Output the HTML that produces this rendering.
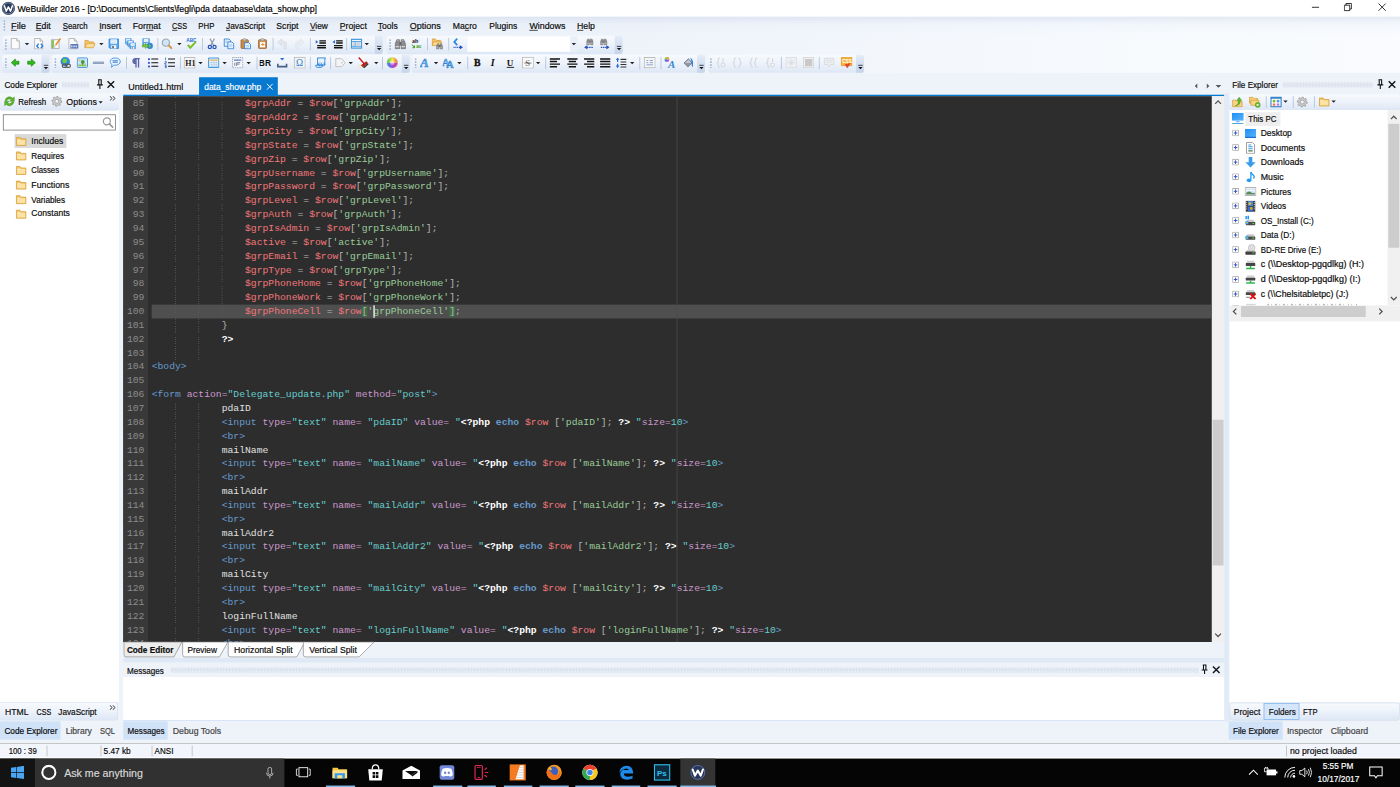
<!DOCTYPE html>
<html>
<head>
<meta charset="utf-8">
<title>WeBuilder 2016</title>
<style>
html,body{margin:0;padding:0;width:1400px;height:787px;overflow:hidden;background:#eef3fa;}
#root{position:absolute;left:0;top:0;width:1920px;height:1080px;transform-origin:0 0;transform:scale(0.729167,0.7287);font-family:"Liberation Sans",sans-serif;font-size:12px;color:#0c0c0c;background:#eef3fa;overflow:hidden;}
#root *{box-sizing:border-box;}
.a{position:absolute;}
.s{position:absolute;display:inline-block;white-space:pre;-webkit-text-stroke:.25px;transform-origin:0 0;transform:scaleX(1);line-height:16px;height:16px;}
.u{text-decoration:underline;}
/* title bar */
#title{left:0;top:0;width:1920px;height:23px;background:#fff;}
/* menubar */
#menu{left:0;top:23px;width:1920px;height:25px;background:linear-gradient(rgba(200,212,232,.45),rgba(220,230,245,.2) 40%,rgba(238,243,250,0));}
/* toolbars */
.tb{border-radius:4px;background:linear-gradient(#f7fafd,#eef3fb 45%,#dde7f5);}
.ovf{position:absolute;right:0;top:0;width:11px;height:25px;border-radius:0 4px 4px 0;background:linear-gradient(#e4ecf7,#c6d4e9);}
.ovf:before{content:"";position:absolute;left:3px;top:14px;width:6px;height:1.500px;background:#111;}
.ovf:after{content:"";position:absolute;left:3px;top:17px;border:3px solid transparent;border-top:3.500px solid #111;border-bottom:none;}
.grip{position:absolute;width:2px;background:repeating-linear-gradient(#a4b7d3 0 2px,transparent 2px 4px);}
.sep{position:absolute;width:1px;height:17px;background:#a9bbd6;}
.dd{position:absolute;border:3.500px solid transparent;border-top:3.500px solid #222;border-bottom:none;width:0;height:0;}
.dots{background-image:radial-gradient(circle at 1px 1px,#ccd5e2 0.9px,transparent 1.2px),radial-gradient(circle at 1px 1px,#ccd5e2 0.9px,transparent 1.2px);background-size:4px 4px;background-position:0 0,2px 2px;}
.vs{top:1023px;width:1px;height:15px;background:#b5b5b5}
/* editor */
#ed{left:169px;top:132px;width:1493px;height:749px;background:#2d2d2d;overflow:hidden;font-family:"Liberation Mono",monospace;font-size:13.333px;color:#cccccc;}
#gut{left:0;top:0;width:34px;height:750px;background:#393939;}
.ln{position:absolute;left:0;width:100%;height:19px;line-height:19px;white-space:pre;}
.ln i{font-style:normal;position:absolute;left:0;width:29px;text-align:right;color:#8c8c8c;}
.ln b.c{font-weight:normal;position:absolute;left:39px;}
.ig{width:1px;background:repeating-linear-gradient(#5c5c5c 0 1px,transparent 1px 2.500px)}
.bm{background:#3f6b45;}
.v{color:#f2777a}.g{color:#99cc99}.t{color:#6699cc}.at{color:#cc99cc}.q{color:#66cccc}.p{color:#b4b7b4}.k{color:#6699cc;font-weight:bold}.w{color:#ffffff;font-weight:bold}.x{color:#e0e0e0}
</style>
</head>
<body>
<div id="root">

<!-- TITLE BAR -->
<div id="title" class="a">
  <svg class="a" style="left:2px;top:2px" width="19" height="19" viewBox="0 0 19 19"><circle cx="9.5" cy="9.5" r="9" fill="#2a3a5c"/><circle cx="9.5" cy="9.5" r="7.6" fill="none" stroke="#9aa7c0" stroke-width="1"/><path d="M4 6 L6.6 13.5 L9.5 7.5 L12.4 13.5 L15 6" fill="none" stroke="#fff" stroke-width="2" stroke-linejoin="round" stroke-linecap="round"/></svg>
  <span class="s" style="left:24px;top:4px;color:#000">WeBuilder 2016 - [D:\Documents\Clients\fegli\pda dataabase\data_show.php]</span>
  <svg class="a" style="left:1799px;top:4px" width="10" height="12" viewBox="0 0 10 12"><path d="M0 6H10" stroke="#000" stroke-width="1.100"/></svg>
  <svg class="a" style="left:1843px;top:4px" width="11" height="12" viewBox="0 0 11 12"><path d="M.6 3.100H8.100V10.600H.6Z M2.900 3.100V.8H10.400V8.300H8.100" fill="none" stroke="#000" stroke-width="1.100"/></svg>
  <svg class="a" style="left:1890px;top:4px" width="11" height="12" viewBox="0 0 11 12"><path d="M.5 .8L10.500 10.800M10.500 .8L.5 10.800" stroke="#000" stroke-width="1.100"/></svg>
</div>

<div class="a" style="left:0;top:23px;width:1920px;height:77px;background:linear-gradient(90deg,#e9eff8,#eef3fa 45%,#f7fafd 80%,#f9fbfe)"></div>
<!-- MENU BAR -->
<div id="menu" class="a">
  <div class="grip" style="left:5px;top:5px;height:14px"></div>
</div>
<span class="s" style="left:15.1px;top:28.0px;transform:scaleX(1.063)"><span class="u">F</span>ile</span>
<span class="s" style="left:49.4px;top:28.0px;transform:scaleX(0.994)"><span class="u">E</span>dit</span>
<span class="s" style="left:86.4px;top:28.0px;transform:scaleX(0.901)"><span class="u">S</span>earch</span>
<span class="s" style="left:135.8px;top:28.0px;transform:scaleX(1.005)"><span class="u">I</span>nsert</span>
<span class="s" style="left:182.4px;top:28.0px;transform:scaleX(1.010)">For<span class="u">m</span>at</span>
<span class="s" style="left:235.9px;top:28.0px;transform:scaleX(0.833)"><span class="u">C</span>SS</span>
<span class="s" style="left:271.5px;top:28.0px;transform:scaleX(0.889)">PHP</span>
<span class="s" style="left:309.9px;top:28.0px;transform:scaleX(0.955)"><span class="u">J</span>avaScript</span>
<span class="s" style="left:378.5px;top:28.0px;transform:scaleX(0.983)">Scr<span class="u">i</span>pt</span>
<span class="s" style="left:425.1px;top:28.0px;transform:scaleX(0.956)"><span class="u">V</span>iew</span>
<span class="s" style="left:466.3px;top:28.0px;transform:scaleX(0.991)"><span class="u">P</span>roject</span>
<span class="s" style="left:518.4px;top:28.0px;transform:scaleX(0.979)"><span class="u">T</span>ools</span>
<span class="s" style="left:562.3px;top:28.0px;transform:scaleX(1.028)"><span class="u">O</span>ptions</span>
<span class="s" style="left:621.3px;top:28.0px;transform:scaleX(0.987)">Ma<span class="u">c</span>ro</span>
<span class="s" style="left:670.6px;top:28.0px;transform:scaleX(0.976)">Plugins</span>
<span class="s" style="left:725.5px;top:28.0px;transform:scaleX(1.014)"><span class="u">W</span>indows</span>
<span class="s" style="left:791.3px;top:28.0px;transform:scaleX(1.000)"><span class="u">H</span>elp</span>


<!-- TOOLBARS -->
<div class="a tb" style="left:3.2px;top:48.5px;width:521.8px;height:25px"><div class="ovf"></div></div>
<div class="grip" style="left:6.7px;top:53.5px;height:15px"></div>
<div class="a tb" style="left:530.2px;top:48.5px;width:323.7px;height:25px"><div class="ovf"></div></div>
<div class="grip" style="left:533.7px;top:53.5px;height:15px"></div>
<div class="a tb" style="left:3.2px;top:74.5px;width:64.9px;height:25px"><div class="ovf"></div></div>
<div class="grip" style="left:6.7px;top:79.5px;height:15px"></div>
<div class="a tb" style="left:71.3px;top:74.5px;width:491.0px;height:25px"><div class="ovf"></div></div>
<div class="grip" style="left:74.8px;top:79.5px;height:15px"></div>
<div class="a tb" style="left:565.4px;top:74.5px;width:401.8px;height:25px"><div class="ovf"></div></div>
<div class="grip" style="left:568.9px;top:79.5px;height:15px"></div>
<div class="a tb" style="left:970.7px;top:74.5px;width:214.5px;height:25px"><div class="ovf"></div></div>
<div class="grip" style="left:974.2px;top:79.5px;height:15px"></div>
<div class="a" style="left:641px;top:50px;width:151px;height:21px;background:#e9eff9"></div><div class="a" style="left:641px;top:50px;width:141px;height:21px;background:#fff"></div>
<svg class="a" style="left:12.6px;top:52px" width="16" height="16" viewBox="0 0 16 16"><path d="M2.500 .8H10L13.500 4.300V15.200H2.500Z" fill="#fbfbfb" stroke="#a3a3a3"/><path d="M10 .8V4.300H13.500" fill="#e8e8e8" stroke="#a3a3a3"/></svg>
<svg class="a" style="left:45.1px;top:52px" width="16" height="16" viewBox="0 0 16 16"><path d="M2.500 .8H10L13.500 4.300V15.200H2.500Z" fill="#fbfbfb" stroke="#a3a3a3"/><path d="M10 .8V4.300H13.500" fill="#e8e8e8" stroke="#a3a3a3"/><path d="M8 8L5.500 11L8 14M11 8L13.500 11L11 14" fill="none" stroke="#2a7fd4" stroke-width="2"/></svg>
<svg class="a" style="left:68.1px;top:52px" width="16" height="16" viewBox="0 0 16 16"><path d="M2.500 2.500H13V14.500H2.500Z" fill="#fbfbfb" stroke="#9a9a9a"/><rect x="3" y="3" width="3" height="11" fill="#8cc152"/><path d="M14.500 1.500L8 10" stroke="#e8902a" stroke-width="2.200" stroke-linecap="round"/><path d="M8 10L6.500 13" stroke="#d9d9d9" stroke-width="2.200" stroke-linecap="round"/></svg>
<svg class="a" style="left:92.1px;top:52px" width="16" height="16" viewBox="0 0 16 16"><path d="M2.500 .8H10L13.500 4.300V15.200H2.500Z" fill="#fbfbfb" stroke="#a3a3a3"/><path d="M10 .8V4.300H13.500" fill="#e8e8e8" stroke="#a3a3a3"/><rect x="4.500" y="8.500" width="11" height="6" rx="1" fill="#5b78b8"/><path d="M6.500 10.500V13M9.500 10.500V13M12.500 10.500V13" stroke="#fff" stroke-width="1.500"/></svg>
<svg class="a" style="left:115.4px;top:52px" width="16" height="16" viewBox="0 0 16 16"><path d="M1.500 13.500V3.500H6L7.500 5.500H13V7" fill="#f5c770" stroke="#d9962f"/><path d="M1.500 13.500L4 7.500H15.500L13 13.500Z" fill="#fbdc9a" stroke="#d9962f"/></svg>
<svg class="a" style="left:148.0px;top:52px" width="16" height="16" viewBox="0 0 16 16"><path d="M1.500 1.500H14.500V14.500H3L1.500 13Z" fill="#56a6ee" stroke="#2b7fd6"/><rect x="3.500" y="2" width="9" height="6" fill="#f6faff"/><path d="M4.500 4H11.500M4.500 6H11.500" stroke="#b9cfe8" stroke-width=".8"/><rect x="4.500" y="10" width="7" height="4.500" fill="#f1f5fa"/><rect x="6" y="11" width="2" height="3" fill="#4a4a4a"/></svg>
<svg class="a" style="left:170.7px;top:52px" width="16" height="16" viewBox="0 0 16 16"><g transform="scale(.62) translate(0,0)"><path d="M1.500 1.500H14.500V14.500H3L1.500 13Z" fill="#56a6ee" stroke="#2b7fd6"/><rect x="3.500" y="2" width="9" height="6" fill="#f6faff"/><path d="M4.500 4H11.500M4.500 6H11.500" stroke="#b9cfe8" stroke-width=".8"/><rect x="4.500" y="10" width="7" height="4.500" fill="#f1f5fa"/><rect x="6" y="11" width="2" height="3" fill="#4a4a4a"/></g><g transform="translate(3,3) scale(.62)"><path d="M1.500 1.500H14.500V14.500H3L1.500 13Z" fill="#56a6ee" stroke="#2b7fd6"/><rect x="3.500" y="2" width="9" height="6" fill="#f6faff"/><path d="M4.500 4H11.500M4.500 6H11.500" stroke="#b9cfe8" stroke-width=".8"/><rect x="4.500" y="10" width="7" height="4.500" fill="#f1f5fa"/><rect x="6" y="11" width="2" height="3" fill="#4a4a4a"/></g><g transform="translate(6,6) scale(.62)"><path d="M1.500 1.500H14.500V14.500H3L1.500 13Z" fill="#56a6ee" stroke="#2b7fd6"/><rect x="3.500" y="2" width="9" height="6" fill="#f6faff"/><path d="M4.500 4H11.500M4.500 6H11.500" stroke="#b9cfe8" stroke-width=".8"/><rect x="4.500" y="10" width="7" height="4.500" fill="#f1f5fa"/><rect x="6" y="11" width="2" height="3" fill="#4a4a4a"/></g></svg>
<svg class="a" style="left:193.6px;top:52px" width="16" height="16" viewBox="0 0 16 16"><g transform="scale(.7) translate(1,0)"><path d="M1.500 1.500H14.500V14.500H3L1.500 13Z" fill="#56a6ee" stroke="#2b7fd6"/><rect x="3.500" y="2" width="9" height="6" fill="#f6faff"/><path d="M4.500 4H11.500M4.500 6H11.500" stroke="#b9cfe8" stroke-width=".8"/><rect x="4.500" y="10" width="7" height="4.500" fill="#f1f5fa"/><rect x="6" y="11" width="2" height="3" fill="#4a4a4a"/></g><circle cx="11.500" cy="11" r="4.200" fill="#2f86d6"/><path d="M9.500 9.500Q11.500 8.500 12.500 10.500Q13.500 12.500 11.500 13.500" fill="#7ac943"/><path d="M1 9.500H5.500V7.500L9.500 11L5.500 14.500V12.500H1Z" fill="#7ac943" stroke="#4c9a1e" stroke-width=".7"/></svg>
<svg class="a" style="left:221.0px;top:52px" width="16" height="16" viewBox="0 0 16 16"><circle cx="6.500" cy="6.500" r="5" fill="#cfe6fa" stroke="#9aa7b5" stroke-width="1.600"/><path d="M10.500 10.500L14 14" stroke="#d9923a" stroke-width="2.600" stroke-linecap="round"/></svg>
<svg class="a" style="left:253.9px;top:52px" width="16" height="16" viewBox="0 0 16 16"><text x="1.500" y="6" font-family="Liberation Sans" font-size="6.500" font-weight="bold" fill="#2a6fd0">ABC</text><path d="M3.500 9.500L7 13.500L14.500 5.500" fill="none" stroke="#7bc12a" stroke-width="2.800"/></svg>
<svg class="a" style="left:283.2px;top:52px" width="16" height="16" viewBox="0 0 16 16"><path d="M5 1L10 10.500M11 1L6 10.500" stroke="#8d99a8" stroke-width="1.600"/><circle cx="4.800" cy="12.500" r="2.200" fill="none" stroke="#2755b8" stroke-width="1.700"/><circle cx="11.200" cy="12.500" r="2.200" fill="none" stroke="#2755b8" stroke-width="1.700"/></svg>
<svg class="a" style="left:305.7px;top:52px" width="16" height="16" viewBox="0 0 16 16"><path d="M1.500 1.500H8L10 3.500V11.500H1.500Z" fill="#eaf4fd" stroke="#2f80d0" stroke-width="1.200"/><path d="M6.500 5.500H12L14.500 8V15H6.500Z" fill="#eaf4fd" stroke="#2f80d0" stroke-width="1.200"/><path d="M3 4.500H7M3 6.500H6M8.500 9.500H12.500M8.500 11.500H12.500" stroke="#8fbbe6"/></svg>
<svg class="a" style="left:329.0px;top:52px" width="16" height="16" viewBox="0 0 16 16"><rect x="1.500" y="2.500" width="10" height="12" rx="1" fill="#c98b4b" stroke="#96612a"/><rect x="4.500" y="1" width="4" height="3" rx="1" fill="#cfcfcf" stroke="#8c8c8c" stroke-width=".7"/><path d="M6.500 6.500H12L14.500 9V15H6.500Z" fill="#eaf4fd" stroke="#2f80d0" stroke-width="1.200"/><path d="M8.500 10.500H12.500M8.500 12.500H12.500" stroke="#8fbbe6"/></svg>
<svg class="a" style="left:351.7px;top:52px" width="16" height="16" viewBox="0 0 16 16"><rect x="2.500" y="2.500" width="11" height="12" rx="1" fill="#c98b4b" stroke="#96612a"/><rect x="6" y="1" width="4" height="3" rx="1" fill="#cfcfcf" stroke="#8c8c8c" stroke-width=".7"/><rect x="4.500" y="5.500" width="7" height="7.500" fill="#fbfbfb"/><path d="M6 9L8.500 6.500V8H10.500V10H8.500V11.500Z" fill="#e8902a"/></svg>
<svg class="a" style="left:379.4px;top:52px" width="16" height="16" viewBox="0 0 16 16"><path d="M13.500 15V8Q13.500 4.500 10 4.500H7V1.500L1.500 6L7 10.500V7.500H9.500Q10.500 7.500 10.500 8.500V15Z" fill="#e4e8ee" stroke="#cdd3dc" stroke-width=".8"/></svg>
<svg class="a" style="left:402.7px;top:52px" width="16" height="16" viewBox="0 0 16 16"><path d="M2.500 15V8Q2.500 4.500 6 4.500H9V1.500L14.500 6L9 10.500V7.500H6.500Q5.500 7.500 5.500 8.500V15Z" fill="#ebeef3" stroke="#d9dee6" stroke-width=".8"/></svg>
<svg class="a" style="left:431.5px;top:52px" width="16" height="16" viewBox="0 0 16 16"><path d="M6 4H15M6 7H15M3 10.500H15M3 13.500H15" stroke="#111" stroke-width="1.800"/><path d="M1 3L4.500 5.500L1 8Z" fill="#2a6fd8"/></svg>
<svg class="a" style="left:454.9px;top:52px" width="16" height="16" viewBox="0 0 16 16"><path d="M6 4H15M6 7H15M3 10.500H15M3 13.500H15" stroke="#111" stroke-width="1.800"/><path d="M4.500 3L1 5.500L4.500 8Z" fill="#2a6fd8"/></svg>
<svg class="a" style="left:480.6px;top:52px" width="16" height="16" viewBox="0 0 16 16"><rect x="1" y="2" width="14" height="12" fill="#f1f6fb" stroke="#3f97dd" stroke-width="1.600"/><path d="M1 5H15M1 11.500H15M6 5V11.500" stroke="#3f97dd" stroke-width="1.200"/><rect x="2.500" y="6" width="2.500" height="4.500" fill="#d0d4d9"/><rect x="7.500" y="6" width="6" height="4.500" fill="#d0d4d9"/></svg>
<svg class="a" style="left:540.6px;top:52px" width="16" height="16" viewBox="0 0 16 16"><path d="M1 15V8L3.200 2.500H6.800V15Z M9.200 15V2.500H12.800L15 8V15Z" fill="#8c8c8c" stroke="#5a5a5a" stroke-width=".8"/><rect x="6.800" y="5.500" width="2.400" height="5" fill="#666"/><path d="M1.500 12H6.300M9.700 12H14.500" stroke="#d4d4d4" stroke-width="1.600"/><path d="M3.500 3.500H6M10 3.500H12.500" stroke="#b5b5b5" stroke-width="1.200"/></svg>
<svg class="a" style="left:564.3px;top:52px" width="16" height="16" viewBox="0 0 16 16"><text x="1" y="7" font-family="Liberation Serif" font-size="8" font-weight="bold" fill="#111">ab</text><text x="6.500" y="14.500" font-family="Liberation Serif" font-size="8" font-weight="bold" fill="#3a9a1e">ac</text><path d="M1 9L4.500 13.500M4.500 13.500H1.500M4.500 13.500V10.500" stroke="#3a9a1e" stroke-width="1.300" fill="none"/><path d="M10.500 1V7" stroke="#9db7e8" stroke-dasharray="1 1"/></svg>
<svg class="a" style="left:592.4px;top:52px" width="16" height="16" viewBox="0 0 16 16"><path d="M.5 10.500V1.500H5L6.500 3.500H12V5.500" fill="#f5c770" stroke="#d9962f"/><path d="M.5 10.500L2.500 5.500H14L12 10.500Z" fill="#fbdc9a" stroke="#d9962f"/><g transform="translate(6,6.500) scale(.6)"><path d="M1 15V8L3.200 2.500H6.800V15Z M9.200 15V2.500H12.800L15 8V15Z" fill="#8c8c8c" stroke="#5a5a5a" stroke-width=".8"/><rect x="6.800" y="5.500" width="2.400" height="5" fill="#666"/><path d="M1.500 12H6.300M9.700 12H14.500" stroke="#d4d4d4" stroke-width="1.600"/><path d="M3.500 3.500H6M10 3.500H12.500" stroke="#b5b5b5" stroke-width="1.200"/></g></svg>
<svg class="a" style="left:620.1px;top:52px" width="16" height="16" viewBox="0 0 16 16"><path d="M7 1L3 5.500L7 10" fill="none" stroke="#2a8ae0" stroke-width="2.400"/><path d="M2 13H11" stroke="#2450b8" stroke-width="1.400" stroke-dasharray="1.500 1"/><path d="M10.500 10L15 13L10.500 16Z" fill="#2450b8"/></svg>
<svg class="a" style="left:799.8px;top:52px" width="16" height="16" viewBox="0 0 16 16"><g transform="translate(4,0) scale(.62)"><path d="M1 15V8L3.200 2.500H6.800V15Z M9.200 15V2.500H12.800L15 8V15Z" fill="#8c8c8c" stroke="#5a5a5a" stroke-width=".8"/><rect x="6.800" y="5.500" width="2.400" height="5" fill="#666"/><path d="M1.500 12H6.300M9.700 12H14.500" stroke="#d4d4d4" stroke-width="1.600"/><path d="M3.500 3.500H6M10 3.500H12.500" stroke="#b5b5b5" stroke-width="1.200"/></g><path d="M5 13H13" stroke="#2450b8" stroke-width="1.400" stroke-dasharray="2 1"/><path d="M5.500 10L1 13L5.500 16Z" fill="#2450b8"/></svg>
<svg class="a" style="left:821.0px;top:52px" width="16" height="16" viewBox="0 0 16 16"><g transform="translate(2,0) scale(.62)"><path d="M1 15V8L3.200 2.500H6.800V15Z M9.200 15V2.500H12.800L15 8V15Z" fill="#8c8c8c" stroke="#5a5a5a" stroke-width=".8"/><rect x="6.800" y="5.500" width="2.400" height="5" fill="#666"/><path d="M1.500 12H6.300M9.700 12H14.500" stroke="#d4d4d4" stroke-width="1.600"/><path d="M3.500 3.500H6M10 3.500H12.500" stroke="#b5b5b5" stroke-width="1.200"/></g><path d="M3 13H11" stroke="#2450b8" stroke-width="1.400" stroke-dasharray="2 1"/><path d="M10.500 10L15 13L10.500 16Z" fill="#2450b8"/></svg>
<svg class="a" style="left:13.3px;top:78px" width="16" height="16" viewBox="0 0 16 16"><path d="M2.500 8L8 3V6H13V10H8V13Z" fill="#33b81f" stroke="#178206" stroke-width=".9"/></svg>
<svg class="a" style="left:35.2px;top:78px" width="16" height="16" viewBox="0 0 16 16"><path d="M13.500 8L8 3V6H3V10H8V13Z" fill="#33b81f" stroke="#178206" stroke-width=".9"/></svg>
<svg class="a" style="left:81.8px;top:78px" width="16" height="16" viewBox="0 0 16 16"><circle cx="7.500" cy="6.500" r="6" fill="#2f8fe0" stroke="#1d6fc0" stroke-width=".8"/><path d="M4 4Q6 1.500 9 2.500Q11 5 9 7.500Q7 10 4.500 8Q3 6 4 4Z" fill="#6fd13a"/><rect x="3.500" y="10" width="6" height="4.500" rx="2" fill="none" stroke="#5a5a5a" stroke-width="1.600"/><rect x="8.500" y="10" width="6" height="4.500" rx="2" fill="none" stroke="#5a5a5a" stroke-width="1.600"/></svg>
<svg class="a" style="left:104.5px;top:78px" width="16" height="16" viewBox="0 0 16 16"><rect x="1" y="1.500" width="14" height="13" rx="1" fill="#e5f1fc" stroke="#3f8fdc" stroke-width="1.300"/><rect x="2.500" y="3" width="11" height="10" fill="#bfe3fa"/><rect x="2.500" y="10.500" width="11" height="2.500" fill="#8ccb4f"/><circle cx="8.500" cy="7" r="2.600" fill="#4f9a2f"/><rect x="8" y="8" width="1" height="3.500" fill="#7a5a2a"/><circle cx="4" cy="4.500" r="1.200" fill="#f7b733"/></svg>
<svg class="a" style="left:127.4px;top:78px" width="16" height="16" viewBox="0 0 16 16"><rect x="0" y="6.500" width="16" height="3" rx="1.500" fill="#9fb0c8"/><rect x="0" y="8" width="16" height="1.500" rx=".7" fill="#8497b3"/></svg>
<svg class="a" style="left:150.4px;top:78px" width="16" height="16" viewBox="0 0 16 16"><path d="M8 1.500C12 1.500 15 3.500 15 6.500C15 9.500 12 11.500 8 11.500C7 11.500 6.500 11.400 6 11.300L3 14.500L3.500 10.500C2 9.600 1 8.200 1 6.500C1 3.500 4 1.500 8 1.500Z" fill="#e4f1fd" stroke="#4a98e0" stroke-width="1.300"/><path d="M4.500 5.500H11.500M4.500 7.500H11.500" stroke="#4a86d0" stroke-width="1.400"/></svg>
<svg class="a" style="left:179.2px;top:78px" width="16" height="16" viewBox="0 0 16 16"><path d="M12.500 2.500H7Q3.500 2.500 3.500 6Q3.500 9 7.500 9V14.500M7.500 2.500V9M11 2.500V14.500" fill="none" stroke="#5560a8" stroke-width="1.800"/><path d="M7 3Q4 3 4 6Q4 8.500 7 8.500Z" fill="#5560a8"/></svg>
<svg class="a" style="left:201.6px;top:78px" width="16" height="16" viewBox="0 0 16 16"><path d="M5.500 3H15M5.500 8H15M5.500 13H15" stroke="#111" stroke-width="1.400"/><rect x="1" y="2" width="2.500" height="2.500" fill="#2a50c0"/><rect x="1" y="7" width="2.500" height="2.500" fill="#2a50c0"/><rect x="1" y="12" width="2.500" height="2.500" fill="#2a50c0"/></svg>
<svg class="a" style="left:225.1px;top:78px" width="16" height="16" viewBox="0 0 16 16"><path d="M5.500 3H15M5.500 8H15M5.500 13H15" stroke="#111" stroke-width="1.400"/><path d="M2 1V4.500M1 6.500H3V8.500H1V10H3M1 11.500H3V15H1M1 13.200H3" stroke="#2a50c0" stroke-width="1" fill="none"/></svg>
<svg class="a" style="left:251.9px;top:78px" width="16" height="16" viewBox="0 0 16 16"><rect x=".5" y="1" width="15" height="14.500" fill="#f4f4f4" stroke="#a8a8a8"/><text x="2" y="12.500" font-family="Liberation Serif" font-size="11" font-weight="bold" fill="#222">H1</text></svg>
<svg class="a" style="left:284.8px;top:78px" width="16" height="16" viewBox="0 0 16 16"><rect x="1" y="1.500" width="14" height="13" rx="1" fill="#f5f9fd" stroke="#3f97dd" stroke-width="1.500"/><path d="M1 4.500H15" stroke="#f0b94a" stroke-width="1.500"/><path d="M5.500 2V14M8.500 2V14M11.500 2V14M1 8H15M1 11H15" stroke="#9ec3e8" stroke-width=".9"/></svg>
<svg class="a" style="left:317.7px;top:78px" width="16" height="16" viewBox="0 0 16 16"><rect x="1" y="1" width="14" height="14" fill="#f7f9fc" stroke="#8a93a3" stroke-width="1.200" stroke-dasharray="1.500 1"/><rect x="3" y="3.500" width="10" height="2" fill="#6f8fc4"/><path d="M4 8V12.500M6.500 8H11.500M6.500 8V12.500M6.500 10H10.500" stroke="#6a7890" stroke-width="1.200" fill="none"/></svg>
<svg class="a" style="left:356.1px;top:78px" width="16" height="16" viewBox="0 0 16 16"><text x="-1" y="12.500" font-family="Liberation Sans" font-size="11.500" font-weight="bold" fill="#111">BR</text></svg>
<svg class="a" style="left:379.4px;top:78px" width="16" height="16" viewBox="0 0 16 16"><path d="M5 1.500H11L8 5Z" fill="#2a6fd8"/><path d="M2 9.500V13.500H14V9.500" fill="none" stroke="#4a5f86" stroke-width="2.200"/></svg>
<svg class="a" style="left:403.0px;top:78px" width="16" height="16" viewBox="0 0 16 16"><rect x=".5" y=".5" width="15" height="15" fill="#f3f3f3" stroke="#a8a8a8"/><text x="3" y="13" font-family="Liberation Serif" font-size="13" fill="#2a7fd4">Ω</text></svg>
<svg class="a" style="left:431.5px;top:78px" width="16" height="16" viewBox="0 0 16 16"><path d="M3.500 1.500H14.500Q13 3 13.500 5V11H3.500Z" fill="#e9f3fd" stroke="#2f86d6" stroke-width="1.300"/><path d="M1 11.500H10.500Q10.500 14.500 8 14.500H3Q1 14.500 1 11.500Z" fill="#e9f3fd" stroke="#2f86d6" stroke-width="1.300"/><path d="M6 8L4.500 10.500L6 13M8 8L9.500 10.500L8 13M12 8L13.500 10.500L12 13" stroke="#2f86d6" stroke-width="1.300" fill="none"/></svg>
<svg class="a" style="left:459.0px;top:78px" width="16" height="16" viewBox="0 0 16 16"><path d="M1.500 2.500H9.500L14.500 8L9.500 13.500H1.500Z" fill="#f4f4f4" stroke="#b0b0b0"/><circle cx="10" cy="8" r="1.300" fill="#cfcfcf"/></svg>
<svg class="a" style="left:489.8px;top:78px" width="16" height="16" viewBox="0 0 16 16"><path d="M2 1L9.500 9.500" stroke="#d0201c" stroke-width="2"/><path d="M5 11.500L12.500 6L14.500 8.500L8 14.500Z" fill="#b81e1a"/><path d="M8 14.500L14.500 8.500L15.500 10L9.500 15.500Z" fill="#333"/><path d="M1.500 10.500H2.500M3.500 12H4.500M1.500 13.500H2.500M4 14.500H5" stroke="#efe23a" stroke-width="1.200"/></svg>
<svg class="a" style="left:529.6px;top:78px" width="16" height="16" viewBox="0 0 16 16"><defs><linearGradient id="wg1" x1="0" y1="0" x2="1" y2="0"><stop offset="0" stop-color="#35c94a"/><stop offset=".5" stop-color="#f4e842"/><stop offset="1" stop-color="#f06a3a"/></linearGradient><linearGradient id="wg2" x1="0" y1="0" x2="1" y2="0"><stop offset="0" stop-color="#2f8ae8"/><stop offset=".5" stop-color="#9a4ae0"/><stop offset="1" stop-color="#e83a8a"/></linearGradient></defs><path d="M.5 8A7.500 7.500 0 0 1 15.500 8Z" fill="url(#wg1)"/><path d="M.5 8A7.500 7.500 0 0 0 15.500 8Z" fill="url(#wg2)"/><circle cx="8" cy="8" r="3" fill="#fff" opacity=".55"/><circle cx="8" cy="8" r="7.500" fill="none" stroke="#c8c8c8" stroke-width=".6"/></svg>
<svg class="a" style="left:575.9px;top:78px" width="16" height="16" viewBox="0 0 16 16"><text x="0" y="14" font-family="Liberation Serif" font-size="18" font-weight="bold" font-style="italic" fill="#5aa7e6" stroke="#2f7fcf" stroke-width=".6">A</text></svg>
<svg class="a" style="left:607.4px;top:78px" width="16" height="16" viewBox="0 0 16 16"><text x="-1" y="13" font-family="Liberation Serif" font-size="14" font-weight="bold" fill="#7dbdf0" stroke="#2f7fcf" stroke-width=".6">A</text><text x="5" y="15" font-family="Liberation Serif" font-size="14" font-weight="bold" fill="#5aa7e6" stroke="#2f7fcf" stroke-width=".6">A</text></svg>
<svg class="a" style="left:647.1px;top:78px" width="16" height="16" viewBox="0 0 16 16"><text x="3" y="13" font-family="Liberation Serif" font-size="13.500" font-weight="bold" fill="#111" stroke="#111" stroke-width=".5">B</text></svg>
<svg class="a" style="left:668.8px;top:78px" width="16" height="16" viewBox="0 0 16 16"><text x="4" y="13" font-family="Liberation Serif" font-size="13.500" font-weight="bold" font-style="italic" fill="#111">I</text></svg>
<svg class="a" style="left:691.8px;top:78px" width="16" height="16" viewBox="0 0 16 16"><text x="3" y="12" font-family="Liberation Serif" font-size="12.500" font-weight="bold" fill="#111">U</text><path d="M3 14.500H13" stroke="#111" stroke-width="1.200"/></svg>
<svg class="a" style="left:715.8px;top:78px" width="16" height="16" viewBox="0 0 16 16"><rect x=".5" y=".5" width="15" height="15" fill="#fafafa" stroke="#a8a8a8"/><text x="4.500" y="12.500" font-family="Liberation Serif" font-size="12" fill="#555">S</text><path d="M3 8.500H13" stroke="#555" stroke-width="1"/></svg>
<svg class="a" style="left:753.1px;top:78px" width="16" height="16" viewBox="0 0 16 16"><path d="M1 3H15M1 6.500H11M1 10H15M1 13.500H11" stroke="#111" stroke-width="2"/></svg>
<svg class="a" style="left:776.5px;top:78px" width="16" height="16" viewBox="0 0 16 16"><path d="M1 3H15M3 6.500H13M1 10H15M3 13.500H13" stroke="#111" stroke-width="2"/></svg>
<svg class="a" style="left:799.5px;top:78px" width="16" height="16" viewBox="0 0 16 16"><path d="M1 3H15M5 6.500H15M1 10H15M5 13.500H15" stroke="#111" stroke-width="2"/></svg>
<svg class="a" style="left:822.4px;top:78px" width="16" height="16" viewBox="0 0 16 16"><path d="M1 3H15M1 6.500H15M1 10H15M1 13.500H15" stroke="#111" stroke-width="2"/></svg>
<svg class="a" style="left:844.3px;top:78px" width="16" height="16" viewBox="0 0 16 16"><path d="M7 3.500H15M7 7H15M7 10.500H15M7 14H15" stroke="#333" stroke-width="1.500"/><path d="M3 1L.5 4.500H2.200V7H3.800V4.500H5.500Z M3 15.500L.5 12H2.200V9.500H3.800V12H5.500Z" fill="#2a6fd8"/></svg>
<svg class="a" style="left:883.4px;top:78px" width="16" height="16" viewBox="0 0 16 16"><rect x=".5" y="1" width="15" height="14" fill="#f6f6f6" stroke="#a8a8a8"/><path d="M3.500 5H6M8 5H12.500M3.500 8H6M8 8H12.500M3.500 11H12.500" stroke="#7f9fd0" stroke-width="1.300"/></svg>
<svg class="a" style="left:910.9px;top:78px" width="16" height="16" viewBox="0 0 16 16"><text x="5" y="15" font-family="Liberation Serif" font-size="15" font-weight="bold" font-style="italic" fill="#3a86d0">A</text><g transform="translate(0,0) scale(.45)"><path d="M.5 8A7.500 7.500 0 0 1 15.500 8Z" fill="#8ad33a"/><path d="M.5 8A7.500 7.500 0 0 0 15.500 8Z" fill="#b04ae0"/><path d="M8 .5A7.500 7.500 0 0 1 15.500 8L8 8Z" fill="#f0a03a"/><path d="M8 15.500A7.500 7.500 0 0 1 .5 8L8 8Z" fill="#3a8ae8"/></g></svg>
<svg class="a" style="left:936.6px;top:78px" width="16" height="16" viewBox="0 0 16 16"><path d="M1 8.500L7 2.500L12.500 8L6.500 14Z" fill="#8f98a3" stroke="#5f6873" stroke-width=".8"/><path d="M2.500 8.500L7 4L11 8Z" fill="#c5ccd4"/><path d="M9.500 1Q13.500 3 13.500 9Q13.500 13.500 12.500 14.500Q11 12 11.500 8Q11 4 9.500 1Z" fill="#2f7fd6"/></svg>
<svg class="a" style="left:980.8px;top:78px" width="16" height="16" viewBox="0 0 16 16"><path d="M6.500 1.500Q4 1.500 4 4V6Q4 7.500 2 8Q4 8.500 4 10V12Q4 14.500 6.500 14.500" fill="none" stroke="#d3d7de" stroke-width="1.500"/><path d="M10.500 2V7" stroke="#d3d7de" stroke-width="1.500"/><circle cx="10.500" cy="11" r="2.600" fill="#f3f4f6" stroke="#d3d7de" stroke-width="1.400"/></svg>
<svg class="a" style="left:1003.4px;top:78px" width="16" height="16" viewBox="0 0 16 16"><path d="M6.500 1.500Q4 1.500 4 4V6Q4 7.500 2 8Q4 8.500 4 10V12Q4 14.500 6.500 14.500" fill="none" stroke="#d3d7de" stroke-width="1.500"/><path d="M9.500 1.500Q12 1.500 12 4V6Q12 7.500 14 8Q12 8.500 12 10V12Q12 14.500 9.500 14.500" fill="none" stroke="#d3d7de" stroke-width="1.500"/></svg>
<svg class="a" style="left:1026.1px;top:78px" width="16" height="16" viewBox="0 0 16 16"><path d="M6.500 1.500Q4 1.500 4 4V6Q4 7.500 2 8Q4 8.500 4 10V12Q4 14.500 6.500 14.500" fill="none" stroke="#d3d7de" stroke-width="1.500"/><path d="M12.500 1.500Q10 1.500 10 4V6Q10 7.500 8 8Q10 8.500 10 10V12Q10 14.500 12.500 14.500" fill="none" stroke="#d3d7de" stroke-width="1.500"/></svg>
<svg class="a" style="left:1049.4px;top:78px" width="16" height="16" viewBox="0 0 16 16"><path d="M6.500 1.500Q4 1.500 4 4V6Q4 7.500 2 8Q4 8.500 4 10V12Q4 14.500 6.500 14.500" fill="none" stroke="#d3d7de" stroke-width="1.500"/><path d="M10.500 2V7" stroke="#d3d7de" stroke-width="1.500"/><circle cx="10.500" cy="11" r="2.600" fill="#f3f4f6" stroke="#d3d7de" stroke-width="1.400"/></svg>
<svg class="a" style="left:1076.8px;top:78px" width="16" height="16" viewBox="0 0 16 16"><rect x="1" y="1" width="14" height="14" fill="#eef0f3" stroke="#d6d9de"/><path d="M8 3V13M3 8H13M5 5L11 11M11 5L5 11" stroke="#d9dce1" stroke-width="1.200"/></svg>
<svg class="a" style="left:1101.1px;top:78px" width="16" height="16" viewBox="0 0 16 16"><rect x="1" y="1" width="14" height="14" fill="#f1f1f1" stroke="#d0d0d0"/><rect x="3" y="3" width="10" height="10" fill="#c9c9c9"/></svg>
<svg class="a" style="left:1128.9px;top:78px" width="16" height="16" viewBox="0 0 16 16"><path d="M1.500 2H14.500V10.500H10L8 13.500L6 10.500H1.500Z" fill="#eceef1" stroke="#d2d5da"/><path d="M4 5H12M4 7.500H12" stroke="#dcdfe4" stroke-width="1.200"/></svg>
<svg class="a" style="left:1152.6px;top:78px" width="16" height="16" viewBox="0 0 16 16"><path d="M.5 1H15.500V12H.5Z" fill="#f5b43a" stroke="#dd9420"/><text x="2" y="8" font-family="Liberation Sans" font-size="6.500" font-weight="bold" fill="#fff">CSS</text><path d="M5.500 10.500L9 15.500L13.500 9Q11.500 7.500 9.500 10Q7.500 8.500 5.500 10.500Z" fill="#e8432e"/></svg>
<div class="dd" style="left:34.0px;top:59px"></div>
<div class="dd" style="left:135.5px;top:59px"></div>
<div class="dd" style="left:243.2px;top:59px"></div>
<div class="dd" style="left:500.3px;top:59px"></div>
<div class="dd" style="left:784.2px;top:59px"></div>
<div class="dd" style="left:272.0px;top:85px"></div>
<div class="dd" style="left:304.9px;top:85px"></div>
<div class="dd" style="left:337.5px;top:85px"></div>
<div class="dd" style="left:478.1px;top:85px"></div>
<div class="dd" style="left:513.1px;top:85px"></div>
<div class="dd" style="left:594.7px;top:85px"></div>
<div class="dd" style="left:627.2px;top:85px"></div>
<div class="dd" style="left:734.8px;top:85px"></div>
<div class="dd" style="left:864.4px;top:85px"></div>
<div class="sep" style="left:215.5px;top:52px"></div>
<div class="sep" style="left:276.5px;top:52px"></div>
<div class="sep" style="left:373.9px;top:52px"></div>
<div class="sep" style="left:424.6px;top:52px"></div>
<div class="sep" style="left:474.7px;top:52px"></div>
<div class="sep" style="left:585.8px;top:52px"></div>
<div class="sep" style="left:615.0px;top:52px"></div>
<div class="sep" style="left:173.4px;top:78px"></div>
<div class="sep" style="left:247.0px;top:78px"></div>
<div class="sep" style="left:351.7px;top:78px"></div>
<div class="sep" style="left:424.6px;top:78px"></div>
<div class="sep" style="left:452.8px;top:78px"></div>
<div class="sep" style="left:524.1px;top:78px"></div>
<div class="sep" style="left:640.6px;top:78px"></div>
<div class="sep" style="left:747.6px;top:78px"></div>
<div class="sep" style="left:877.2px;top:78px"></div>
<div class="sep" style="left:905.7px;top:78px"></div>
<div class="sep" style="left:1071.3px;top:78px"></div>
<div class="sep" style="left:1122.7px;top:78px"></div>
<!--TOOLBARS-->
<!-- LEFT PANEL -->
<div class="a" style="left:0;top:151px;width:163px;height:813px;background:#fff"></div>
<div class="a dots" style="left:85px;top:113px;width:37px;height:7px"></div>
<svg class="a" style="left:131px;top:108px" width="12" height="16" viewBox="0 0 12 16"><path d="M3.5 1.500H8.5M4.500 1.500V8M7.800 1.500V8M2 8.500H10M6 9V14" stroke="#111" stroke-width="1.5" fill="none"/></svg>
<svg class="a" style="left:146px;top:110px" width="12" height="12" viewBox="0 0 12 12"><path d="M1.500 1.500L10.500 10.500M10.500 1.500L1.500 10.500" stroke="#111" stroke-width="1.900"/></svg>
<div class="a tb" style="left:0;top:128px;width:163px;height:24px;border-bottom:1px solid #c9d5e6"></div>
<svg class="a" style="left:150px;top:131px" width="9" height="8" viewBox="0 0 9 8"><path d="M1 1L3.500 4L1 7M5 1L7.500 4L5 7" fill="none" stroke="#222" stroke-width="1.300"/></svg>
<div class="a" style="left:4px;top:157px;width:155px;height:22px;background:#fff;border:1px solid #6a6a6a"></div>
<svg class="a" style="left:140px;top:160px" width="16" height="16" viewBox="0 0 16 16"><circle cx="6.500" cy="6.500" r="4.800" fill="none" stroke="#9a9a9a" stroke-width="1.600"/><path d="M10 10L14.500 14.500" stroke="#9a9a9a" stroke-width="2.200" stroke-linecap="round"/></svg>
<div class="a" style="left:20px;top:184px;width:71px;height:19px;background:#d9d9d9"></div>
<!-- left icons -->
<svg class="a" style="left:21px;top:185.8px" width="16" height="16" viewBox="0 0 16 16"><path d="M1.500 13.500V2.500H6.500L8 4.500H14.500V13.500Z" fill="#f3c565" stroke="#d59a35"/><path d="M2.500 6H13.500V12.500H2.500Z" fill="#fbe3a6"/><path d="M2.500 6H7" stroke="#fff6dc"/></svg>
<svg class="a" style="left:21px;top:205.7px" width="16" height="16" viewBox="0 0 16 16"><path d="M1.500 13.500V2.500H6.500L8 4.500H14.500V13.500Z" fill="#f3c565" stroke="#d59a35"/><path d="M2.500 6H13.500V12.500H2.500Z" fill="#fbe3a6"/><path d="M2.500 6H7" stroke="#fff6dc"/></svg>
<svg class="a" style="left:21px;top:225.7px" width="16" height="16" viewBox="0 0 16 16"><path d="M1.500 13.500V2.500H6.500L8 4.500H14.500V13.500Z" fill="#f3c565" stroke="#d59a35"/><path d="M2.500 6H13.500V12.500H2.500Z" fill="#fbe3a6"/><path d="M2.500 6H7" stroke="#fff6dc"/></svg>
<svg class="a" style="left:21px;top:245.7px" width="16" height="16" viewBox="0 0 16 16"><path d="M1.500 13.500V2.500H6.500L8 4.500H14.500V13.500Z" fill="#f3c565" stroke="#d59a35"/><path d="M2.500 6H13.500V12.500H2.500Z" fill="#fbe3a6"/><path d="M2.500 6H7" stroke="#fff6dc"/></svg>
<svg class="a" style="left:21px;top:265.6px" width="16" height="16" viewBox="0 0 16 16"><path d="M1.500 13.500V2.500H6.500L8 4.500H14.500V13.500Z" fill="#f3c565" stroke="#d59a35"/><path d="M2.500 6H13.500V12.500H2.500Z" fill="#fbe3a6"/><path d="M2.500 6H7" stroke="#fff6dc"/></svg>
<svg class="a" style="left:21px;top:285.6px" width="16" height="16" viewBox="0 0 16 16"><path d="M1.500 13.500V2.500H6.500L8 4.500H14.500V13.500Z" fill="#f3c565" stroke="#d59a35"/><path d="M2.500 6H13.500V12.500H2.500Z" fill="#fbe3a6"/><path d="M2.500 6H7" stroke="#fff6dc"/></svg>
<svg class="a" style="left:5px;top:131px" width="16" height="16" viewBox="0 0 16 16"><path d="M2 7A6 6 0 0 1 12.500 4L14.500 2V8H8.500L10.500 6A3.500 3.500 0 0 0 4.500 7Z" fill="#5cb82a" stroke="#3a8a14" stroke-width=".7"/><path d="M14 9A6 6 0 0 1 3.500 12L1.500 14V8H7.500L5.500 10A3.500 3.500 0 0 0 11.500 9Z" fill="#5cb82a" stroke="#3a8a14" stroke-width=".7"/></svg>
<svg class="a" style="left:70px;top:131px" width="16" height="16" viewBox="0 0 16 16"><path d="M8 1L9.300 1.200L9.800 3L11.200 3.800L12.900 3L14 4.300L13 5.900L13.400 7.300L15 8L14.800 9.600L13 10L12.200 11.300L13 13L11.700 14L10.100 13L8.700 13.400L8 15L6.400 14.800L6 13L4.700 12.200L3 13L2 11.700L3 10.100L2.600 8.700L1 8L1.200 6.400L3 6L3.800 4.700L3 3L4.300 2L5.900 3L7.300 2.600Z" fill="#c9c9c9" stroke="#8e8e8e" stroke-width=".8"/><circle cx="8" cy="8" r="2.600" fill="#f4f4f4" stroke="#8e8e8e" stroke-width=".8"/></svg>
<div class="dd" style="left:135px;top:139px"></div>
<!--LEFTICONS-->
<span class="s" style="left:5.5px;top:109.1px;transform:scaleX(0.947)">Code Explorer</span>
<span class="s" style="left:25.4px;top:132.2px;transform:scaleX(0.914)">Refresh</span>
<span class="s" style="left:91.2px;top:132.2px;transform:scaleX(1.011)">Options</span>
<span class="s" style="left:42.9px;top:185.8px;transform:scaleX(0.979)">Includes</span>
<span class="s" style="left:42.9px;top:205.8px;transform:scaleX(0.934)">Requires</span>
<span class="s" style="left:42.9px;top:225.7px;transform:scaleX(0.890)">Classes</span>
<span class="s" style="left:42.9px;top:245.6px;transform:scaleX(0.999)">Functions</span>
<span class="s" style="left:42.9px;top:265.5px;transform:scaleX(0.941)">Variables</span>
<span class="s" style="left:42.9px;top:285.4px;transform:scaleX(0.977)">Constants</span>
<div class="a tb" style="left:0;top:963px;width:162px;height:26px;border:1px solid #d3ddeb;border-left:none"></div>
<svg class="a" style="left:150px;top:967px" width="9" height="8" viewBox="0 0 9 8"><path d="M1 1L3.500 4L1 7M5 1L7.500 4L5 7" fill="none" stroke="#222" stroke-width="1.300"/></svg>
<div class="a" style="left:0;top:990px;width:83px;height:25px;background:#cfe2f8"></div>
<div class="a" style="left:169px;top:990px;width:61px;height:25px;background:#cfe2f8"></div>
<span class="s" style="left:7.0px;top:969.1px;transform:scaleX(0.986)">HTML</span>
<span class="s" style="left:50.2px;top:969.1px;transform:scaleX(0.822)">CSS</span>
<span class="s" style="left:79.5px;top:969.1px;transform:scaleX(0.937)">JavaScript</span>
<span class="s" style="left:6.3px;top:995.2px;transform:scaleX(0.949)">Code Explorer</span>
<span class="s" style="left:90.1px;top:995.2px;transform:scaleX(0.983);color:#444">Library</span>
<span class="s" style="left:136.7px;top:995.2px;transform:scaleX(0.868);color:#444">SQL</span>
<span class="s" style="left:175.1px;top:995.2px;transform:scaleX(0.925)">Messages</span>
<span class="s" style="left:236.7px;top:995.2px;transform:scaleX(0.996);color:#444">Debug Tools</span>
<!--LEFTPANEL-->
<!-- EDITOR -->
<div class="a" style="left:169px;top:129.500px;width:1510px;height:2.500px;background:#0779d0"></div>
<div id="ed" class="a">
<div id="gut" class="a"></div>
<div class="a" style="left:39px;top:286px;width:1454px;height:19px;background:#4f4f4f"></div>
<div class="a" style="left:759px;top:0;width:1px;height:750px;background:#4d4d4d"></div>
<div class="a ig" style="left:71px;top:1px;height:361px"></div>
<div class="a ig" style="left:103px;top:1px;height:361px"></div>
<div class="a ig" style="left:135px;top:1px;height:304px"></div>
<div class="a ig" style="left:71px;top:419px;height:342px"></div>
<div class="a ig" style="left:103px;top:419px;height:342px"></div>
<div class="ln" style="top:0.5px"><i>85</i><b class="c">                <span class="v">$grpAddr</span><span class="p"> = </span><span class="v">$row</span><span class="p">[</span><span class="g">'grpAddr'</span><span class="p">];</span></b></div>
<div class="ln" style="top:19.5px"><i>86</i><b class="c">                <span class="v">$grpAddr2</span><span class="p"> = </span><span class="v">$row</span><span class="p">[</span><span class="g">'grpAddr2'</span><span class="p">];</span></b></div>
<div class="ln" style="top:38.5px"><i>87</i><b class="c">                <span class="v">$grpCity</span><span class="p"> = </span><span class="v">$row</span><span class="p">[</span><span class="g">'grpCity'</span><span class="p">];</span></b></div>
<div class="ln" style="top:57.5px"><i>88</i><b class="c">                <span class="v">$grpState</span><span class="p"> = </span><span class="v">$row</span><span class="p">[</span><span class="g">'grpState'</span><span class="p">];</span></b></div>
<div class="ln" style="top:76.5px"><i>89</i><b class="c">                <span class="v">$grpZip</span><span class="p"> = </span><span class="v">$row</span><span class="p">[</span><span class="g">'grpZip'</span><span class="p">];</span></b></div>
<div class="ln" style="top:95.5px"><i>90</i><b class="c">                <span class="v">$grpUsername</span><span class="p"> = </span><span class="v">$row</span><span class="p">[</span><span class="g">'grpUsername'</span><span class="p">];</span></b></div>
<div class="ln" style="top:114.5px"><i>91</i><b class="c">                <span class="v">$grpPassword</span><span class="p"> = </span><span class="v">$row</span><span class="p">[</span><span class="g">'grpPassword'</span><span class="p">];</span></b></div>
<div class="ln" style="top:133.5px"><i>92</i><b class="c">                <span class="v">$grpLevel</span><span class="p"> = </span><span class="v">$row</span><span class="p">[</span><span class="g">'grpLevel'</span><span class="p">];</span></b></div>
<div class="ln" style="top:152.5px"><i>93</i><b class="c">                <span class="v">$grpAuth</span><span class="p"> = </span><span class="v">$row</span><span class="p">[</span><span class="g">'grpAuth'</span><span class="p">];</span></b></div>
<div class="ln" style="top:171.5px"><i>94</i><b class="c">                <span class="v">$grpIsAdmin</span><span class="p"> = </span><span class="v">$row</span><span class="p">[</span><span class="g">'grpIsAdmin'</span><span class="p">];</span></b></div>
<div class="ln" style="top:190.5px"><i>95</i><b class="c">                <span class="v">$active</span><span class="p"> = </span><span class="v">$row</span><span class="p">[</span><span class="g">'active'</span><span class="p">];</span></b></div>
<div class="ln" style="top:209.5px"><i>96</i><b class="c">                <span class="v">$grpEmail</span><span class="p"> = </span><span class="v">$row</span><span class="p">[</span><span class="g">'grpEmail'</span><span class="p">];</span></b></div>
<div class="ln" style="top:228.5px"><i>97</i><b class="c">                <span class="v">$grpType</span><span class="p"> = </span><span class="v">$row</span><span class="p">[</span><span class="g">'grpType'</span><span class="p">];</span></b></div>
<div class="ln" style="top:247.5px"><i>98</i><b class="c">                <span class="v">$grpPhoneHome</span><span class="p"> = </span><span class="v">$row</span><span class="p">[</span><span class="g">'grpPhoneHome'</span><span class="p">];</span></b></div>
<div class="ln" style="top:266.5px"><i>99</i><b class="c">                <span class="v">$grpPhoneWork</span><span class="p"> = </span><span class="v">$row</span><span class="p">[</span><span class="g">'grpPhoneWork'</span><span class="p">];</span></b></div>
<div class="ln" style="top:285.5px"><i>100</i><b class="c">                <span class="v">$grpPhoneCell</span><span class="p"> = </span><span class="v">$row</span><span class="p bm">[</span><span class="g">'grpPhoneCell'</span><span class="p bm">]</span><span class="p">;</span></b></div>
<div class="ln" style="top:304.5px"><i>101</i><b class="c">            <span class="p">}</span></b></div>
<div class="ln" style="top:323.5px"><i>102</i><b class="c">            <span class="w">?&gt;</span></b></div>
<div class="ln" style="top:342.5px"><i>103</i><b class="c"></b></div>
<div class="ln" style="top:361.5px"><i>104</i><b class="c"><span class="t">&lt;body&gt;</span></b></div>
<div class="ln" style="top:380.5px"><i>105</i><b class="c"></b></div>
<div class="ln" style="top:399.5px"><i>106</i><b class="c"><span class="t">&lt;form</span> <span class="at">action=</span><span class="q">"Delegate_update.php"</span> <span class="at">method=</span><span class="q">"post"</span><span class="t">&gt;</span></b></div>
<div class="ln" style="top:418.5px"><i>107</i><b class="c">            <span class="x">pdaID</span></b></div>
<div class="ln" style="top:437.5px"><i>108</i><b class="c">            <span class="t">&lt;input</span> <span class="at">type=</span><span class="q">"text"</span> <span class="at">name=</span> <span class="q">"pdaID"</span> <span class="at">value=</span> <span class="q">"</span><span class="w">&lt;?php</span> <span class="k">echo</span> <span class="v">$row</span> <span class="p">[</span><span class="g">'pdaID'</span><span class="p">];</span> <span class="w">?&gt;</span> <span class="q">"</span><span class="at">size=</span><span class="q">10</span><span class="t">&gt;</span></b></div>
<div class="ln" style="top:456.5px"><i>109</i><b class="c">            <span class="t">&lt;br&gt;</span></b></div>
<div class="ln" style="top:475.5px"><i>110</i><b class="c">            <span class="x">mailName</span></b></div>
<div class="ln" style="top:494.5px"><i>111</i><b class="c">            <span class="t">&lt;input</span> <span class="at">type=</span><span class="q">"text"</span> <span class="at">name=</span> <span class="q">"mailName"</span> <span class="at">value=</span> <span class="q">"</span><span class="w">&lt;?php</span> <span class="k">echo</span> <span class="v">$row</span> <span class="p">[</span><span class="g">'mailName'</span><span class="p">];</span> <span class="w">?&gt;</span> <span class="q">"</span><span class="at">size=</span><span class="q">10</span><span class="t">&gt;</span></b></div>
<div class="ln" style="top:513.5px"><i>112</i><b class="c">            <span class="t">&lt;br&gt;</span></b></div>
<div class="ln" style="top:532.5px"><i>113</i><b class="c">            <span class="x">mailAddr</span></b></div>
<div class="ln" style="top:551.5px"><i>114</i><b class="c">            <span class="t">&lt;input</span> <span class="at">type=</span><span class="q">"text"</span> <span class="at">name=</span> <span class="q">"mailAddr"</span> <span class="at">value=</span> <span class="q">"</span><span class="w">&lt;?php</span> <span class="k">echo</span> <span class="v">$row</span> <span class="p">[</span><span class="g">'mailAddr'</span><span class="p">];</span> <span class="w">?&gt;</span> <span class="q">"</span><span class="at">size=</span><span class="q">10</span><span class="t">&gt;</span></b></div>
<div class="ln" style="top:570.5px"><i>115</i><b class="c">            <span class="t">&lt;br&gt;</span></b></div>
<div class="ln" style="top:589.5px"><i>116</i><b class="c">            <span class="x">mailAddr2</span></b></div>
<div class="ln" style="top:608.5px"><i>117</i><b class="c">            <span class="t">&lt;input</span> <span class="at">type=</span><span class="q">"text"</span> <span class="at">name=</span> <span class="q">"mailAddr2"</span> <span class="at">value=</span> <span class="q">"</span><span class="w">&lt;?php</span> <span class="k">echo</span> <span class="v">$row</span> <span class="p">[</span><span class="g">'mailAddr2'</span><span class="p">];</span> <span class="w">?&gt;</span> <span class="q">"</span><span class="at">size=</span><span class="q">10</span><span class="t">&gt;</span></b></div>
<div class="ln" style="top:627.5px"><i>118</i><b class="c">            <span class="t">&lt;br&gt;</span></b></div>
<div class="ln" style="top:646.5px"><i>119</i><b class="c">            <span class="x">mailCity</span></b></div>
<div class="ln" style="top:665.5px"><i>120</i><b class="c">            <span class="t">&lt;input</span> <span class="at">type=</span><span class="q">"text"</span> <span class="at">name=</span> <span class="q">"mailCity"</span> <span class="at">value=</span> <span class="q">"</span><span class="w">&lt;?php</span> <span class="k">echo</span> <span class="v">$row</span> <span class="p">[</span><span class="g">'mailCity'</span><span class="p">];</span> <span class="w">?&gt;</span> <span class="q">"</span><span class="at">size=</span><span class="q">10</span><span class="t">&gt;</span></b></div>
<div class="ln" style="top:684.5px"><i>121</i><b class="c">            <span class="t">&lt;br&gt;</span></b></div>
<div class="ln" style="top:703.5px"><i>122</i><b class="c">            <span class="x">loginFullName</span></b></div>
<div class="ln" style="top:722.5px"><i>123</i><b class="c">            <span class="t">&lt;input</span> <span class="at">type=</span><span class="q">"text"</span> <span class="at">name=</span> <span class="q">"loginFullName"</span> <span class="at">value=</span> <span class="q">"</span><span class="w">&lt;?php</span> <span class="k">echo</span> <span class="v">$row</span> <span class="p">[</span><span class="g">'loginFullName'</span><span class="p">];</span> <span class="w">?&gt;</span> <span class="q">"</span><span class="at">size=</span><span class="q">10</span><span class="t">&gt;</span></b></div>
<div class="ln" style="top:741.5px"><i>124</i><b class="c">            <span class="t">&lt;br&gt;</span></b></div>
<div class="a" style="left:343px;top:287px;width:1.500px;height:17px;background:#e8e8e8"></div>
</div>
<!-- editor tabs header -->
<div class="a" style="left:273px;top:106px;width:108px;height:25px;background:#0779d0"></div>
<svg class="a" style="left:365px;top:114px" width="10" height="10" viewBox="0 0 10 10"><path d="M1 1L9 9M9 1L1 9" stroke="#fff" stroke-width="1.300"/></svg>
<svg class="a" style="left:1634px;top:112px" width="46" height="12" viewBox="0 0 46 12"><path d="M8 2.500L4.500 6L8 9.500Z M21 2.500L24.500 6L21 9.500Z M33 4.500H41L37 8.500Z" fill="#555"/></svg>
<!-- editor vertical scrollbar -->
<div class="a" style="left:1662px;top:132px;width:17px;height:749px;background:#f0f0f0"></div>
<div class="a" style="left:1663px;top:576px;width:15px;height:200px;background:#cdcdcd"></div>
<svg class="a" style="left:1665px;top:136px" width="11" height="8" viewBox="0 0 11 8"><path d="M1.500 6.500L5.500 2.500L9.500 6.500" fill="none" stroke="#505050" stroke-width="1.700"/></svg>
<svg class="a" style="left:1665px;top:868px" width="11" height="8" viewBox="0 0 11 8"><path d="M1.500 1.500L5.500 5.500L9.500 1.500" fill="none" stroke="#505050" stroke-width="1.700"/></svg>
<span class="s" style="left:175.5px;top:111.2px;transform:scaleX(1.028)">Untitled1.html</span>
<span class="s" style="left:279.8px;top:111.2px;transform:scaleX(0.968);color:#fff">data_show.php</span>
<!--EDITOR-->
<!-- BOTTOM: editor mode tabs + messages -->
<svg class="a" style="left:169px;top:880px" width="360" height="24" viewBox="0 0 360 24">
<path d="M1 1H80.500L69.500 21.500H4Q1 21.500 1 18.500Z" fill="#ececec" stroke="#8c8c8c" stroke-width="1"/>
<path d="M81.500 1H143.500L132 21.500H84.500Q81.500 21.500 81.500 18.500Z" fill="#fff" stroke="#8c8c8c" stroke-width="1"/>
<path d="M144 1H249L238 21.500H147Q144 21.500 144 18.500Z" fill="#fff" stroke="#8c8c8c" stroke-width="1"/>
<path d="M247 1H344L323.500 21.500H250Q247 21.500 247 18.500Z" fill="#fff" stroke="#8c8c8c" stroke-width="1"/>
</svg>
<div class="a" style="left:169px;top:903px;width:1510px;height:6px;background:#dfe8f5"></div>
<div class="a dots" style="left:234px;top:916px;width:1410px;height:7px"></div>
<svg class="a" style="left:1646px;top:911px" width="12" height="16" viewBox="0 0 12 16"><path d="M3.500 1.500H8.500M4.500 1.500V8M7.800 1.500V8M2 8.500H10M6 9V14" stroke="#111" stroke-width="1.500" fill="none"/></svg>
<svg class="a" style="left:1662px;top:913px" width="12" height="12" viewBox="0 0 12 12"><path d="M1.500 1.500L10.500 10.500M10.500 1.500L1.500 10.500" stroke="#111" stroke-width="1.900"/></svg>
<div class="a" style="left:169px;top:929px;width:1510px;height:60px;background:#fff;border-bottom:1px solid #c6daf3"></div>
<span class="s" style="left:174.0px;top:884.1px;transform:scaleX(0.938);font-weight:bold">Code Editor</span>
<span class="s" style="left:257.0px;top:884.1px;transform:scaleX(0.951)">Preview</span>
<span class="s" style="left:320.5px;top:884.1px;transform:scaleX(0.996)">Horizontal Split</span>
<span class="s" style="left:423.8px;top:884.1px;transform:scaleX(0.989)">Vertical Split</span>
<span class="s" style="left:174.2px;top:913px;transform:scaleX(0.928)">Messages</span>
<!--BOTTOM-->
<!-- RIGHT PANEL -->
<div class="a" style="left:1679px;top:128px;width:7px;height:862px;background:#e1eaf7"></div>
<div class="a dots" style="left:1759px;top:113px;width:124px;height:7px"></div>
<svg class="a" style="left:1887px;top:108px" width="12" height="16" viewBox="0 0 12 16"><path d="M3.500 1.500H8.500M4.500 1.500V8M7.800 1.500V8M2 8.500H10M6 9V14" stroke="#111" stroke-width="1.500" fill="none"/></svg>
<svg class="a" style="left:1903px;top:110px" width="12" height="12" viewBox="0 0 12 12"><path d="M1.500 1.500L10.500 10.500M10.500 1.500L1.500 10.500" stroke="#111" stroke-width="1.900"/></svg>
<div class="a tb" style="left:1686px;top:129px;width:234px;height:23px;border-bottom:1px solid #c9d5e6"></div>
<div class="a" style="left:1686px;top:151px;width:234px;height:813px;background:#fff"></div>
<svg class="a" style="left:1689.1px;top:131.5px" width="16" height="16" viewBox="0 0 16 16"><path d="M1.500 14.500V5.500H6L7.500 7.500H14.500V14.500Z" fill="#f7d583" stroke="#d59a35"/><path d="M5 13Q10 12 9.500 6H7L10.500 1.500L14 6H11.800Q12.500 13 5 13Z" fill="#5cb82a" stroke="#3a8a14" stroke-width=".6"/></svg>
<svg class="a" style="left:1713.1px;top:131.5px" width="16" height="16" viewBox="0 0 16 16"><path d="M.5 9.500V1.500H5L6 3H11.500V9.500Z" fill="#f3c565" stroke="#d59a35"/><path d="M2 4H10M2 6H10" stroke="#fbe9b8"/><path d="M2.500 12.500V5.500H13.500V12.500Z" fill="#f7d583" stroke="#d59a35"/><circle cx="12" cy="12" r="3.500" fill="#5cb82a" stroke="#3a8a14" stroke-width=".6"/><path d="M14 12H10.500M12 10.500L10.500 12L12 13.500" stroke="#fff" stroke-width="1.200" fill="none"/></svg>
<svg class="a" style="left:1741.8px;top:131.5px" width="16" height="16" viewBox="0 0 16 16"><rect x="1" y="1.500" width="14" height="13" fill="#fff" stroke="#2f7fc2" stroke-width="1.600"/><rect x="1" y="1.500" width="14" height="2" fill="#2f7fc2"/><rect x="3.500" y="5" width="3.500" height="3.500" fill="#7ab82a"/><rect x="9" y="5" width="3.500" height="3.500" fill="#4a9ae8"/><rect x="3.500" y="10" width="3.500" height="3" fill="#f2703a"/><rect x="9" y="10" width="3.500" height="3" fill="#a87af0"/></svg>
<svg class="a" style="left:1778.3px;top:131.5px" width="16" height="16" viewBox="0 0 16 16"><path d="M8 1L9.300 1.200L9.800 3L11.200 3.800L12.900 3L14 4.300L13 5.900L13.400 7.300L15 8L14.800 9.600L13 10L12.200 11.300L13 13L11.700 14L10.100 13L8.700 13.400L8 15L6.400 14.800L6 13L4.700 12.200L3 13L2 11.700L3 10.100L2.600 8.700L1 8L1.200 6.400L3 6L3.800 4.700L3 3L4.300 2L5.900 3L7.300 2.600Z" fill="#c9c9c9" stroke="#8e8e8e" stroke-width=".8"/><circle cx="8" cy="8" r="2.600" fill="#f4f4f4" stroke="#8e8e8e" stroke-width=".8"/></svg>
<svg class="a" style="left:1808.3px;top:131.5px" width="16" height="16" viewBox="0 0 16 16"><path d="M1.500 13.500V2.500H6.500L8 4.500H14.500V13.500Z" fill="#f3c565" stroke="#d59a35"/><path d="M2.500 6H13.500V12.500H2.500Z" fill="#fbe3a6"/><path d="M2.500 6H7" stroke="#fff6dc"/></svg>
<div class="dd" style="left:1759.9px;top:138px"></div>
<div class="dd" style="left:1826.0px;top:138px"></div>
<div class="sep" style="left:1736.3px;top:132px;height:16px"></div>
<div class="sep" style="left:1773.3px;top:132px;height:16px"></div>
<div class="sep" style="left:1802.1px;top:132px;height:16px"></div>
<!--RTOOLICONS-->
<div class="a" style="left:1708px;top:153.500px;width:47.500px;height:19px;background:#eeeeee"></div>
<!-- tree scrollbars -->
<div class="a" style="left:1903px;top:151px;width:17px;height:268px;background:#f0f0f0"></div>
<div class="a" style="left:1904px;top:170px;width:15px;height:170px;background:#cdcdcd"></div>
<svg class="a" style="left:1906px;top:157px" width="11" height="8" viewBox="0 0 11 8"><path d="M1.500 6.500L5.500 2.500L9.500 6.500" fill="none" stroke="#505050" stroke-width="1.700"/></svg>
<svg class="a" style="left:1906px;top:406px" width="11" height="8" viewBox="0 0 11 8"><path d="M1.500 1.500L5.500 5.500L9.500 1.500" fill="none" stroke="#505050" stroke-width="1.700"/></svg>
<div class="a" style="left:1686px;top:419px;width:234px;height:22px;background:#f0f0f0"></div>
<div class="a" style="left:1702px;top:420px;width:171px;height:15px;background:#cdcdcd"></div>
<svg class="a" style="left:1689px;top:422px" width="8" height="11" viewBox="0 0 8 11"><path d="M6.500 1.500L2.500 5.500L6.500 9.500" fill="none" stroke="#505050" stroke-width="1.700"/></svg>
<svg class="a" style="left:1890px;top:422px" width="8" height="11" viewBox="0 0 8 11"><path d="M1.500 1.500L5.500 5.500L1.500 9.500" fill="none" stroke="#505050" stroke-width="1.700"/></svg>
<svg class="a" style="left:1690px;top:178.2px" width="9" height="9" viewBox="0 0 9 9"><rect x=".5" y=".5" width="8" height="8" fill="#fff" stroke="#8e8e8e"/><path d="M2 4.500H7M4.500 2V7" stroke="#2a4ec0" stroke-width="1.300"/></svg>
<svg class="a" style="left:1690px;top:198.2px" width="9" height="9" viewBox="0 0 9 9"><rect x=".5" y=".5" width="8" height="8" fill="#fff" stroke="#8e8e8e"/><path d="M2 4.500H7M4.500 2V7" stroke="#2a4ec0" stroke-width="1.300"/></svg>
<svg class="a" style="left:1690px;top:218.2px" width="9" height="9" viewBox="0 0 9 9"><rect x=".5" y=".5" width="8" height="8" fill="#fff" stroke="#8e8e8e"/><path d="M2 4.500H7M4.500 2V7" stroke="#2a4ec0" stroke-width="1.300"/></svg>
<svg class="a" style="left:1690px;top:238.3px" width="9" height="9" viewBox="0 0 9 9"><rect x=".5" y=".5" width="8" height="8" fill="#fff" stroke="#8e8e8e"/><path d="M2 4.500H7M4.500 2V7" stroke="#2a4ec0" stroke-width="1.300"/></svg>
<svg class="a" style="left:1690px;top:258.3px" width="9" height="9" viewBox="0 0 9 9"><rect x=".5" y=".5" width="8" height="8" fill="#fff" stroke="#8e8e8e"/><path d="M2 4.500H7M4.500 2V7" stroke="#2a4ec0" stroke-width="1.300"/></svg>
<svg class="a" style="left:1690px;top:278.3px" width="9" height="9" viewBox="0 0 9 9"><rect x=".5" y=".5" width="8" height="8" fill="#fff" stroke="#8e8e8e"/><path d="M2 4.500H7M4.500 2V7" stroke="#2a4ec0" stroke-width="1.300"/></svg>
<svg class="a" style="left:1690px;top:298.4px" width="9" height="9" viewBox="0 0 9 9"><rect x=".5" y=".5" width="8" height="8" fill="#fff" stroke="#8e8e8e"/><path d="M2 4.500H7M4.500 2V7" stroke="#2a4ec0" stroke-width="1.300"/></svg>
<svg class="a" style="left:1690px;top:318.4px" width="9" height="9" viewBox="0 0 9 9"><rect x=".5" y=".5" width="8" height="8" fill="#fff" stroke="#8e8e8e"/><path d="M2 4.500H7M4.500 2V7" stroke="#2a4ec0" stroke-width="1.300"/></svg>
<svg class="a" style="left:1690px;top:338.4px" width="9" height="9" viewBox="0 0 9 9"><rect x=".5" y=".5" width="8" height="8" fill="#fff" stroke="#8e8e8e"/><path d="M2 4.500H7M4.500 2V7" stroke="#2a4ec0" stroke-width="1.300"/></svg>
<svg class="a" style="left:1690px;top:358.5px" width="9" height="9" viewBox="0 0 9 9"><rect x=".5" y=".5" width="8" height="8" fill="#fff" stroke="#8e8e8e"/><path d="M2 4.500H7M4.500 2V7" stroke="#2a4ec0" stroke-width="1.300"/></svg>
<svg class="a" style="left:1690px;top:378.5px" width="9" height="9" viewBox="0 0 9 9"><rect x=".5" y=".5" width="8" height="8" fill="#fff" stroke="#8e8e8e"/><path d="M2 4.500H7M4.500 2V7" stroke="#2a4ec0" stroke-width="1.300"/></svg>
<svg class="a" style="left:1690px;top:398.5px" width="9" height="9" viewBox="0 0 9 9"><rect x=".5" y=".5" width="8" height="8" fill="#fff" stroke="#8e8e8e"/><path d="M2 4.500H7M4.500 2V7" stroke="#2a4ec0" stroke-width="1.300"/></svg>
<div class="a" style="left:1690px;top:418.6px;width:9px;height:1px;background:#c8c8c8"></div>
<div class="a" style="left:1709px;top:417.1px;width:13px;height:1.500px;background:#d8d8d8"></div>
<div class="a" style="left:1738px;top:416.6px;width:125px;height:2px;background:repeating-linear-gradient(90deg,#999 0 2px,transparent 2px 5px,#bbb 5px 6px,transparent 6px 11px);opacity:.7"></div>
<svg class="a" style="left:1689px;top:154.2px" width="17" height="17" viewBox="0 0 17 17"><defs><linearGradient id="mg" x1="0" y1="0" x2="1" y2="1"><stop offset="0" stop-color="#1f8ef5"/><stop offset="1" stop-color="#56b4fb"/></linearGradient></defs><rect x=".5" y="1" width="16" height="10.500" fill="url(#mg)"/><path d="M6 13H11" stroke="#4aa3f0" stroke-width="1.200"/><path d="M1 15.500H16" stroke="#4aa3f0" stroke-width="1.500"/><path d="M1 15.500H2.500M14.500 15.500H16" stroke="#7ac943" stroke-width="1.500"/></svg>
<svg class="a" style="left:1707px;top:174.7px" width="16" height="16" viewBox="0 0 16 16"><defs><linearGradient id="mg2" x1="0" y1="0" x2="1" y2="1"><stop offset="0" stop-color="#1f8ef5"/><stop offset="1" stop-color="#56b4fb"/></linearGradient></defs><rect x=".5" y="2" width="15" height="11" fill="url(#mg2)"/><path d="M.5 13.500H15.500" stroke="#1a6fd0" stroke-width="1.600"/></svg>
<svg class="a" style="left:1707px;top:194.7px" width="16" height="16" viewBox="0 0 16 16"><path d="M2.500 .5H10.500L13.500 3.500V15.500H2.500Z" fill="#fff" stroke="#7a7a7a"/><path d="M5 4H9M5 6.500H11M5 9H11" stroke="#3f9ae8" stroke-width="1.400"/><rect x="5" y="11" width="6" height="2" fill="#6a8a6a"/></svg>
<svg class="a" style="left:1707px;top:214.7px" width="16" height="16" viewBox="0 0 16 16"><path d="M5.500 .5H10.500V7.500H15L8 15L1 7.500H5.500Z" fill="#3b9bea"/></svg>
<svg class="a" style="left:1707px;top:234.8px" width="16" height="16" viewBox="0 0 16 16"><path d="M8.500 1V11.500" stroke="#1e9af0" stroke-width="1.800"/><path d="M8.500 1Q9.500 4 12.500 6Q14 7.500 12 10" fill="none" stroke="#1e9af0" stroke-width="1.800"/><ellipse cx="6" cy="12.500" rx="3.300" ry="2.500" fill="#1e9af0"/></svg>
<svg class="a" style="left:1707px;top:254.8px" width="16" height="16" viewBox="0 0 16 16"><rect x=".5" y="2.500" width="15" height="11" fill="#f4f4f4" stroke="#9a9a9a"/><rect x="2" y="4" width="12" height="8" fill="#cfe6f7"/><path d="M2 10Q6 6.500 9 9Q12 10.500 14 9.500V12H2Z" fill="#5a8a5a"/><path d="M2 7Q7 5 14 7" stroke="#fff" stroke-width="1.200" fill="none"/></svg>
<svg class="a" style="left:1707px;top:274.8px" width="16" height="16" viewBox="0 0 16 16"><rect x="1.500" y=".5" width="13" height="15" fill="#3a3a3a"/><rect x="4.500" y="1" width="7" height="6.500" fill="#4a8ae0"/><rect x="4.500" y="8.500" width="7" height="6.500" fill="#2f6fd0"/><circle cx="7" cy="4.500" r="1.800" fill="#f0c020"/><circle cx="9" cy="11" r="1.800" fill="#e8a020"/><path d="M2.800 2V14M13.200 2V14" stroke="#e8e8e8" stroke-width="1.200" stroke-dasharray="1.500 1.500"/></svg>
<svg class="a" style="left:1707px;top:294.9px" width="16" height="16" viewBox="0 0 16 16"><path d="M2 9.500L4 6.500H12L14 9.500Z" fill="#c9c9c9"/><rect x="1.500" y="9.500" width="13" height="4.500" rx=".8" fill="#4a4a4a"/><rect x="10.500" y="11" width="2.500" height="1.500" fill="#56d34a"/><path d="M1 1.500H3V6H1ZM3.800 1H6V6H3.800Z" fill="#1e9af0"/><path d="M1 8.500L5 7.500V13L1 12.500Z" fill="#4aa3f0"/><path d="M2 10.500L4.500 10" stroke="#e8c020" stroke-width="1.200"/></svg>
<svg class="a" style="left:1707px;top:314.9px" width="16" height="16" viewBox="0 0 16 16"><path d="M2 9.500L4 6.500H12L14 9.500Z" fill="#c9c9c9"/><rect x="1.500" y="9.500" width="13" height="4.500" rx=".8" fill="#4a4a4a"/><rect x="10.500" y="11" width="2.500" height="1.500" fill="#56d34a"/><path d="M1 9L5 8V13.500L1 13Z" fill="#4aa3f0"/><path d="M2 11.500L4.500 11" stroke="#8ac93a" stroke-width="1.200"/></svg>
<svg class="a" style="left:1707px;top:334.9px" width="16" height="16" viewBox="0 0 16 16"><circle cx="9.500" cy="5" r="4.500" fill="#e4e4e4" stroke="#a8a8a8" stroke-width=".8"/><circle cx="9.500" cy="5" r="1.400" fill="#fff" stroke="#a8a8a8" stroke-width=".6"/><path d="M1.500 10L3 8H13L14.500 10Z" fill="#c9c9c9"/><rect x="1" y="10" width="14" height="4.500" rx=".8" fill="#3f3f3f"/><rect x="10.500" y="11.500" width="3" height="1.300" fill="#56d34a"/></svg>
<svg class="a" style="left:1707px;top:355.0px" width="16" height="16" viewBox="0 0 16 16"><path d="M2 6L3.500 3H12.500L14 6Z" fill="#cfcfcf"/><rect x="1.500" y="6" width="13" height="4" rx=".8" fill="#454545"/><path d="M8 10V13M2 13.500H14" stroke="#2fb84a" stroke-width="2"/></svg>
<svg class="a" style="left:1707px;top:375.0px" width="16" height="16" viewBox="0 0 16 16"><path d="M2 6L3.500 3H12.500L14 6Z" fill="#cfcfcf"/><rect x="1.500" y="6" width="13" height="4" rx=".8" fill="#454545"/><path d="M8 10V13M2 13.500H14" stroke="#2fb84a" stroke-width="2"/></svg>
<svg class="a" style="left:1707px;top:395.0px" width="16" height="16" viewBox="0 0 16 16"><path d="M2 6L3.500 3H12.500L14 6Z" fill="#cfcfcf"/><rect x="1.500" y="6" width="13" height="4" rx=".8" fill="#454545"/><path d="M2 13H7" stroke="#9a9a9a" stroke-width="1.600"/><path d="M7.500 8L15 15.500M15 8L7.500 15.500" stroke="#e01010" stroke-width="2.600"/></svg>
<!--TREEICONS-->
<span class="s" style="left:1690.1px;top:109.2px;transform:scaleX(0.928)">File Explorer</span>
<span class="s" style="left:1711.5px;top:155px;transform:scaleX(0.900)">This PC</span>
<span class="s" style="left:1728.8px;top:174.7px;transform:scaleX(0.969)">Desktop</span>
<span class="s" style="left:1728.8px;top:194.7px;transform:scaleX(1.003)">Documents</span>
<span class="s" style="left:1728.8px;top:214.7px;transform:scaleX(0.991)">Downloads</span>
<span class="s" style="left:1728.8px;top:234.8px;transform:scaleX(1.002)">Music</span>
<span class="s" style="left:1728.8px;top:254.8px;transform:scaleX(0.962)">Pictures</span>
<span class="s" style="left:1728.8px;top:274.8px;transform:scaleX(0.955)">Videos</span>
<span class="s" style="left:1728.8px;top:294.9px;transform:scaleX(0.925)">OS_Install (C:)</span>
<span class="s" style="left:1728.8px;top:314.9px;transform:scaleX(0.949)">Data (D:)</span>
<span class="s" style="left:1728.8px;top:334.9px;transform:scaleX(0.907)">BD-RE Drive (E:)</span>
<span class="s" style="left:1728.8px;top:355.0px;transform:scaleX(1.032)">c (\\Desktop-pgqdlkg) (H:)</span>
<span class="s" style="left:1728.8px;top:375.0px;transform:scaleX(1.030)">d (\\Desktop-pgqdlkg) (I:)</span>
<span class="s" style="left:1728.8px;top:395.0px;transform:scaleX(1.002)">c (\\Chelsitabletpc) (J:)</span>
<div class="a tb" style="left:1686px;top:964px;width:234px;height:25px;border:1px solid #d3ddeb"></div>
<div class="a" style="left:1733px;top:965px;width:49px;height:23px;background:#d5e6fa;border:1px solid #7db3ec"></div>
<div class="a" style="left:1685px;top:990px;width:74px;height:25px;background:#cfe2f8"></div>
<span class="s" style="left:1691.9px;top:968.8px;transform:scaleX(0.976)">Project</span>
<span class="s" style="left:1739.5px;top:968.8px;transform:scaleX(0.925)">Folders</span>
<span class="s" style="left:1787.0px;top:968.8px;transform:scaleX(0.877)">FTP</span>
<span class="s" style="left:1691.4px;top:995.2px;transform:scaleX(0.930)">File Explorer</span>
<span class="s" style="left:1765.0px;top:995.2px;transform:scaleX(0.984);color:#444">Inspector</span>
<span class="s" style="left:1825.1px;top:995.2px;transform:scaleX(1.001);color:#444">Clipboard</span>
<!--RIGHTPANEL-->
<!-- STATUS BAR -->
<div class="a" style="left:0;top:1020px;width:1920px;height:18.500px;background:#f2f5fb;border-top:1px solid #b4b4b4"></div><div class="a" style="left:0;top:1038.500px;width:1920px;height:2px;background:#fff"></div>
<div class="a vs" style="left:64px"></div><div class="a vs" style="left:138px"></div><div class="a vs" style="left:208px"></div><div class="a vs" style="left:263px"></div><div class="a vs" style="left:1764px"></div>
<span class="s" style="left:11.8px;top:1023.1px;transform:scaleX(0.885)">100 : 39</span>
<span class="s" style="left:141.8px;top:1023.1px;transform:scaleX(0.947)">5.47 kb</span>
<span class="s" style="left:212.0px;top:1023.1px;transform:scaleX(0.920)">ANSI</span>
<span class="s" style="left:1768.6px;top:1023.4px;transform:scaleX(0.996)">no project loaded</span>
<!--STATUS-->
<!-- TASKBAR -->
<div class="a" style="left:0;top:1040.500px;width:1920px;height:40px;background:#050505"></div><div class="a" style="left:0;top:1040.500px;width:48px;height:40px;background:#131313"></div>
<div class="a" style="left:48px;top:1040.500px;width:342px;height:40px;background:#313131"></div>
<div class="a" style="left:932.500px;top:1040.500px;width:48.500px;height:40px;background:#343434"></div>
<svg class="a" style="left:15px;top:1051px" width="18" height="18" viewBox="0 0 18 18"><path d="M0 2.500L7.400 1.500V8.500H0Z M8.300 1.400L18 0V8.500H8.300Z M0 9.400H7.400V16.500L0 15.500Z M8.300 9.400H18V18L8.300 16.600Z" fill="#4aa5f2"/></svg>
<svg class="a" style="left:56px;top:1049px" width="22" height="22" viewBox="0 0 22 22"><circle cx="11" cy="11" r="9" fill="none" stroke="#fff" stroke-width="2.800"/></svg>
<svg class="a" style="left:364px;top:1052px" width="12" height="18" viewBox="0 0 12 18"><rect x="3.500" y="1" width="5" height="10" rx="2.500" fill="none" stroke="#bdbdbd" stroke-width="1.200"/><path d="M1.500 8.500Q1.500 13 6 13Q10.500 13 10.500 8.500M6 13V16.500" fill="none" stroke="#bdbdbd" stroke-width="1.200"/></svg>
<svg class="a" style="left:404.4px;top:1048.0px" width="24" height="24" viewBox="0 0 24 24"><rect x="6" y="5.500" width="12" height="12.500" fill="none" stroke="#fff" stroke-width="1.200"/><path d="M4.500 7.500H2.500V16H4.500M19.500 7.500H21.500V16H19.500" fill="none" stroke="#fff" stroke-width="1.100"/></svg>
<svg class="a" style="left:453.9px;top:1048.0px" width="24" height="24" viewBox="0 0 24 24"><path d="M2 5.500H9L10.500 7.500H22V20H2Z" fill="#f5c84a"/><rect x="2" y="9" width="20" height="11" fill="#fbe08a"/><path d="M5 20V13H19V20Z" fill="#2f9af0"/><path d="M8.500 16H15.500V20H8.500Z" fill="#fbe08a"/></svg>
<svg class="a" style="left:502.7px;top:1048.0px" width="24" height="24" viewBox="0 0 24 24"><path d="M2 7.500H22L20.500 23H3.500Z" fill="#fff"/><path d="M7.500 7.500Q7.500 1.500 12 1.500Q16.500 1.500 16.500 7.500" fill="none" stroke="#fff" stroke-width="1.700"/><path d="M8 11.500H11.500V15H8ZM12.500 11.500H16V15H12.500ZM8 16H11.500V19.500H8ZM12.500 16H16V19.500H12.500Z" fill="#0a0a0a"/></svg>
<svg class="a" style="left:550.7px;top:1048.0px" width="26" height="24" viewBox="0 0 26 24"><path d="M1 9.500L13 3L25 9.500V21H1Z" fill="#fff"/><path d="M4.500 10H21.500L13 16Z" fill="#0a0a0a"/><path d="M13 16L21.500 10V12.500L14.500 17.500Z" fill="#0a0a0a"/></svg>
<svg class="a" style="left:601.4px;top:1048.0px" width="24" height="24" viewBox="0 0 24 24"><rect x="2" y="2" width="20" height="20" rx="3" fill="#7289da"/><path d="M6 7Q12 5 18 7Q20 11 20 16Q18 18 16 18L15 16.500Q12 17.500 9 16.500L8 18Q6 18 4 16Q4 11 6 7Z" fill="#fff"/><ellipse cx="9.500" cy="12.500" rx="1.600" ry="1.900" fill="#7289da"/><ellipse cx="14.500" cy="12.500" rx="1.600" ry="1.900" fill="#7289da"/></svg>
<svg class="a" style="left:647.7px;top:1048.0px" width="24" height="24" viewBox="0 0 24 24"><rect x="3.500" y="2.500" width="10" height="19" rx="1.500" fill="none" stroke="#e02a5a" stroke-width="1.600"/><path d="M6 5H11M7 19H10" stroke="#e02a5a" stroke-width="1.200"/><path d="M16.500 8.500L20 5.500M17 12H21.500M16.500 15.500L20 18.500" stroke="#e02a5a" stroke-width="1.500"/></svg>
<svg class="a" style="left:698.4px;top:1048.0px" width="24" height="24" viewBox="0 0 24 24"><rect x="1" y="1" width="22" height="22" fill="#f47b20"/><path d="M15 2.500L20 2V21.500H9Z" fill="#fff"/><path d="M10 19H20M11.500 15.500H20M13 12H20M14 8.500H20M15 5H20" stroke="#c9c9c9" stroke-width="1"/></svg>
<svg class="a" style="left:747.8px;top:1048.0px" width="24" height="24" viewBox="0 0 24 24"><circle cx="12" cy="12" r="10.500" fill="#f59a1e"/><circle cx="11" cy="10.500" r="6.500" fill="#3a5fc0"/><path d="M3 8Q7 9 8.500 12.500Q10 16 15 15.500Q19 14.500 19.500 9Q22 13 20.500 17Q17 22.500 11 22Q4 21 2 14Q1.500 10.500 3 8Z" fill="#f0701a"/><path d="M4 6Q8 4 9 8L6.500 9.500Z" fill="#f5c020"/></svg>
<svg class="a" style="left:796.7px;top:1048.0px" width="24" height="24" viewBox="0 0 24 24"><circle cx="12" cy="12" r="10.500" fill="#fff"/><path d="M12 12L2.900 6.750A10.500 10.500 0 0 1 21.100 6.750Z" fill="#e8432e"/><path d="M12 12L21.100 6.750A10.500 10.500 0 0 1 12 22.500Z" fill="#f7c71a"/><path d="M12 12L12 22.500A10.500 10.500 0 0 1 2.900 6.750Z" fill="#37a84e"/><circle cx="12" cy="12" r="4.800" fill="#fff"/><circle cx="12" cy="12" r="3.800" fill="#3f85f0"/></svg>
<svg class="a" style="left:846.5px;top:1048.0px" width="24" height="24" viewBox="0 0 24 24"><path d="M2.500 12.500Q3 3.500 12.500 3Q21 3.500 21.500 13.500H8.500Q9 18 14 18Q17.500 18 20.500 16.500V20.500Q17 22 13 22Q4 21.500 3.500 14Q4.500 9 9 8Q6 9 5 12.500Q5 9 8.500 8.800H15.500Q15 6.500 12 6.500Q6 7 2.500 12.500Z" fill="#1e8be8"/></svg>
<svg class="a" style="left:895.9px;top:1048.0px" width="24" height="24" viewBox="0 0 24 24"><rect x="1.500" y="1.500" width="21" height="21" fill="#0d2b3e" stroke="#2fc2f0" stroke-width="1.500"/><text x="5" y="16.500" font-family="Liberation Sans" font-size="11" font-weight="bold" fill="#2fc2f0">Ps</text></svg>
<svg class="a" style="left:945.0px;top:1048.0px" width="24" height="24" viewBox="0 0 24 24"><circle cx="12" cy="12" r="11" fill="#27365a"/><circle cx="12" cy="12" r="9.500" fill="none" stroke="#8b98b8" stroke-width=".8"/><path d="M5 8L8 16.500L12 9.500L16 16.500L19 8" fill="none" stroke="#fff" stroke-width="2.800" stroke-linejoin="round" stroke-linecap="round"/></svg>
<div class="a" style="left:446.5px;top:1078px;width:40.0px;height:2px;background:#82bdec"></div>
<div class="a" style="left:593.8px;top:1078px;width:40.3px;height:2px;background:#82bdec"></div>
<div class="a" style="left:640.5px;top:1078px;width:39.8px;height:2px;background:#82bdec"></div>
<div class="a" style="left:690.5px;top:1078px;width:39.8px;height:2px;background:#82bdec"></div>
<div class="a" style="left:739.9px;top:1078px;width:39.8px;height:2px;background:#82bdec"></div>
<div class="a" style="left:789.3px;top:1078px;width:39.8px;height:2px;background:#82bdec"></div>
<div class="a" style="left:838.6px;top:1078px;width:39.8px;height:2px;background:#82bdec"></div>
<div class="a" style="left:888.0px;top:1078px;width:39.8px;height:2px;background:#82bdec"></div>
<div class="a" style="left:932.6px;top:1078px;width:49.4px;height:2px;background:#82bdec"></div>
<svg class="a" style="left:1710.7px;top:1054px" width="16" height="12" viewBox="0 0 16 12"><path d="M2 9L8 3L14 9" fill="none" stroke="#fff" stroke-width="1.500"/></svg>
<svg class="a" style="left:1732.8px;top:1051px" width="20" height="18" viewBox="0 0 20 18"><rect x="4" y="5" width="13" height="8" fill="#fff"/><rect x="17" y="7.500" width="2" height="3" fill="#fff"/><path d="M1 3V8H4M2.500 1.500V3M5 1.500V3M1.500 3H6V5" stroke="#fff" stroke-width="1.200" fill="none"/></svg>
<svg class="a" style="left:1759.6px;top:1051px" width="18" height="18" viewBox="0 0 18 18"><path d="M2 16A14 14 0 0 1 16 2" fill="none" stroke="#fff" stroke-width="1.300"/><path d="M6 16A10 10 0 0 1 16 6" fill="none" stroke="#fff" stroke-width="1.300"/><path d="M10 16A6 6 0 0 1 16 10" fill="none" stroke="#fff" stroke-width="1.300"/><circle cx="14.500" cy="14.500" r="1.800" fill="#fff"/></svg>
<svg class="a" style="left:1780.7px;top:1051px" width="20" height="18" viewBox="0 0 20 18"><path d="M1.500 6.500H4.500L8.500 3V15L4.500 11.500H1.500Z" fill="none" stroke="#fff" stroke-width="1.200"/><path d="M11 6.500Q12.500 9 11 11.500M13.500 4.500Q16 9 13.500 13.500M16 2.500Q19.500 9 16 15.500" fill="none" stroke="#fff" stroke-width="1.200"/></svg>
<svg class="a" style="left:1877.1px;top:1050px" width="20" height="20" viewBox="0 0 20 20"><path d="M1.500 2.500H18.500V14.500H12L10 17.500L8 14.500H1.500Z" fill="none" stroke="#fff" stroke-width="1.400"/></svg>
<!--TASKICONS-->
<span class="s" style="left:88.2px;top:1052.8px;transform:scaleX(0.973);font-size:15px;color:#d8d8d8">Ask me anything</span>
<span class="s" style="left:1814.1px;top:1043.2px;transform:scaleX(0.942);color:#fff">5:55 PM</span>
<span class="s" style="left:1806.9px;top:1060.7px;transform:scaleX(0.954);color:#fff">10/17/2017</span>
<!--TASKBAR-->

</div>
</body>
</html>
